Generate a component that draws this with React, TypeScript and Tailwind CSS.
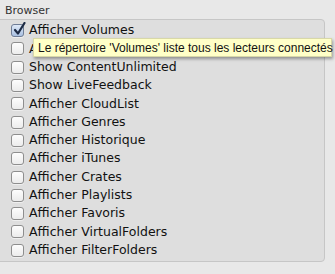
import React from 'react';

const rows = [
  { label: 'Afficher Volumes', checked: true },
  { label: 'Afficher Appareils', checked: false },
  { label: 'Show ContentUnlimited', checked: false },
  { label: 'Show LiveFeedback', checked: false },
  { label: 'Afficher CloudList', checked: false },
  { label: 'Afficher Genres', checked: false },
  { label: 'Afficher Historique', checked: false },
  { label: 'Afficher iTunes', checked: false },
  { label: 'Afficher Crates', checked: false },
  { label: 'Afficher Playlists', checked: false },
  { label: 'Afficher Favoris', checked: false },
  { label: 'Afficher VirtualFolders', checked: false },
  { label: 'Afficher FilterFolders', checked: false },
];

const CheckBox: React.FC<{ checked: boolean }> = ({ checked }) => (
  <span
    className={
      checked
        ? 'relative w-[13px] h-[13px] shrink-0 rounded-[3px] border border-[#6f7d96] bg-gradient-to-b from-[#dfe9f7] to-[#a9c0e2] shadow-[0_1px_0_rgba(255,255,255,0.5)]'
        : 'relative w-[13px] h-[13px] shrink-0 rounded-[3px] border border-[#8e8e8e] bg-gradient-to-b from-[#fdfdfd] to-[#ececec] shadow-[0_1px_0_rgba(255,255,255,0.5)]'
    }
  >
    {checked && (
      <svg className="absolute left-[1px] top-[-3px]" width="13" height="14" viewBox="0 0 13 14">
        <path d="M2 8 L5 11.5 L11.5 1" fill="none" stroke="#1c2a44" strokeWidth="2.2" strokeLinecap="round" strokeLinejoin="round" />
      </svg>
    )}
  </span>
);

export default function App() {
  return (
    <div
      className="relative w-[335px] h-[274px] overflow-hidden bg-[#e8e8e8] text-[#111]"
      style={{ fontFamily: '"DejaVu Sans", "Lucida Grande", sans-serif' }}
    >
      <div className="pl-[5px] pt-[4px] h-[19px] text-[11px] leading-[13px] text-[#333]">Browser</div>
      <div className="ml-[-4px] w-[329px] h-[243px] rounded-[4px] border border-[#c6c6c6] bg-[#dedede] pl-[14px] pt-[1.5px]">
        {rows.map((r) => (
          <div key={r.label} className="flex items-center h-[18.3px] gap-[5px] text-[12.5px] leading-none">
            <CheckBox checked={r.checked} />
            <span>{r.label}</span>
          </div>
        ))}
      </div>
      <div
        className="absolute left-[33px] top-[38px] w-[299px] h-[19px] flex items-center pl-[4px] bg-[#ffffc7] border border-[#d8d8a8] shadow-[1px_2px_3px_rgba(0,0,0,0.35)] text-[12px] whitespace-nowrap text-[#111]"
        style={{ fontFamily: '"Liberation Sans", Arial, sans-serif' }}
      >
        Le répertoire 'Volumes' liste tous les lecteurs connectés
      </div>
    </div>
  );
}
